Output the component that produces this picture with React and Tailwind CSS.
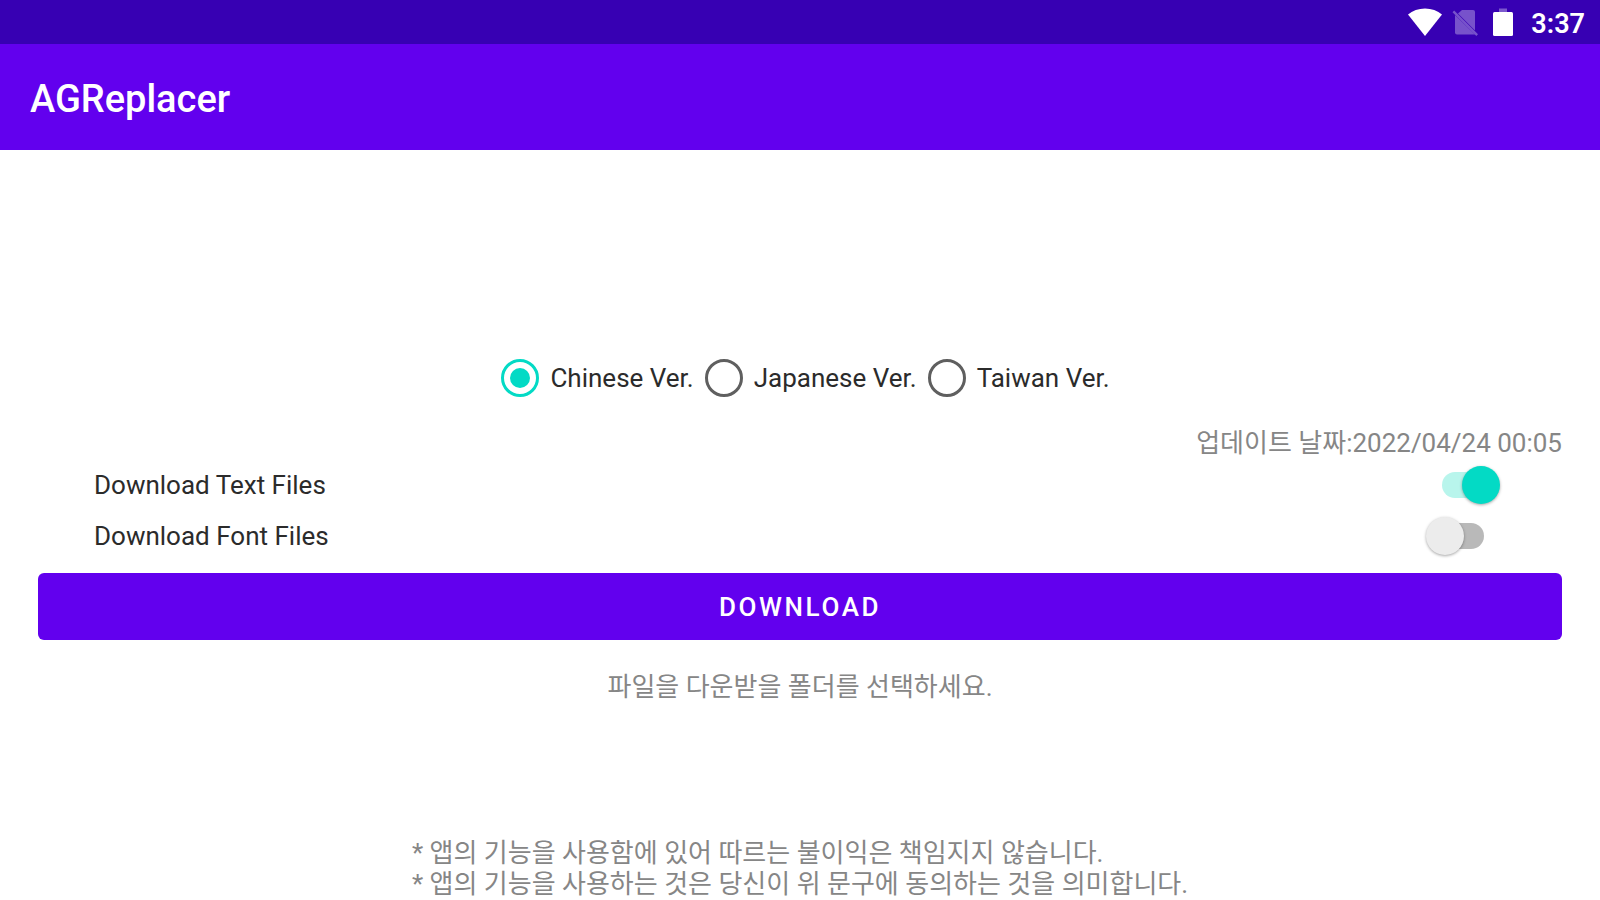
import React, { useState } from "react";

const versions = [
  { id: "chinese", label: "Chinese Ver." },
  { id: "japanese", label: "Japanese Ver." },
  { id: "taiwan", label: "Taiwan Ver." },
];

const StatusBar = () => {
  return (
    <div className="h-11 px-[15px] bg-[#3700b3] text-white flex items-center justify-end">
      {/* Wifi */}
      <svg className="w-9 h-7 mr-2" viewBox="0 0 36 28" fill="currentColor">
        <path d="M18 28 L1 6.5 C5.5 2.5 11.5 0.5 18 0.5 C24.5 0.5 30.5 2.5 35 6.5 Z" />
      </svg>
      {/* No sim */}
      <svg className="w-7 h-7 mr-3" viewBox="0 0 28 28" fill="currentColor" opacity="0.32">
        <path d="M11 2 H22 Q24 2 24 4 V22.5 L7 5.5 Z" />
        <path d="M4 7 L24 26.5 H6 Q4 26.5 4 24.5 Z" />
        <path d="M1.5 4.2 L3.2 2.5 L27 26.3 L25.3 28 Z" />
      </svg>
      {/* Battery */}
      <svg className="w-6 h-7 mr-4" viewBox="0 0 24 28" fill="currentColor">
        <path d="M8 0.5 H16 V4 H8 Z" opacity="0.35" />
        <rect x="2" y="4" width="20" height="24" rx="1.5" />
      </svg>
      <span className="pt-1 text-[27px] leading-8 font-semibold">3:37</span>
    </div>
  );
};

const Switch = ({ label, checked, onChange }) => {
  return (
    <label className="h-[51px] pl-14 pr-[62px] flex items-center justify-between text-[#2b2b2b]">
      <span>{label}</span>
      <input
        type="checkbox"
        role="switch"
        checked={checked}
        onChange={(e) => onChange(e.target.checked)}
        className="relative appearance-none w-[74px] h-[38px] before:absolute before:left-4 before:top-1.5 before:w-[42px] before:h-[26px] before:rounded-full before:bg-[#b9b9b9] checked:before:bg-[#b8f5ec] after:absolute after:left-0 after:top-0 after:size-[38px] after:rounded-full after:bg-[#ececec] after:shadow-[0_1px_3px_rgba(0,0,0,0.35)] checked:after:left-9 checked:after:bg-[#03dac5]"
      />
    </label>
  );
};

const App = () => {
  const [version, setVersion] = useState("chinese");
  const [textFiles, setTextFiles] = useState(true);
  const [fontFiles, setFontFiles] = useState(false);

  return (
    <div className="min-h-screen bg-white flex flex-col text-[26px] leading-[30px] font-[Roboto,'Noto_Sans_CJK_KR',sans-serif]">
      <StatusBar />

      <header className="h-[106px] px-[30px] pt-1 bg-[#6200ee] text-white flex items-center">
        <h1 className="text-[38px] leading-[44px] font-medium">AGReplacer</h1>
      </header>

      <main className="flex-1 px-[38px] pt-[198px] flex flex-col">
        {/* Version picker */}
        <div role="radiogroup" className="h-[60px] flex items-center justify-center text-[#2b2b2b]">
          {versions.map((v) => (
            <label key={v.id} className="pl-[11px] flex items-center gap-[11px]">
              <input
                type="radio"
                name="version"
                value={v.id}
                checked={version === v.id}
                onChange={() => setVersion(v.id)}
                className="appearance-none size-[38px] rounded-full border-[3px] border-[#5f5f5f] checked:border-[#03dac5] grid place-items-center checked:before:size-5 checked:before:rounded-full checked:before:bg-[#03dac5]"
              />
              <span>{v.label}</span>
            </label>
          ))}
        </div>

        <p className="mt-5 mb-px text-right text-[#868686]">업데이트 날짜:2022/04/24 00:05</p>

        <Switch label="Download Text Files" checked={textFiles} onChange={setTextFiles} />
        <Switch label="Download Font Files" checked={fontFiles} onChange={setFontFiles} />

        <button
          type="button"
          className="mt-3 h-[67px] w-full rounded-md bg-[#6200ee] text-white font-medium tracking-widest"
        >
          DOWNLOAD
        </button>

        <p className="mt-8 text-center text-[#868686]">파일을 다운받을 폴더를 선택하세요.</p>
      </main>

      <footer className="flex justify-center leading-[31px] text-[#868686]">
        <div>
          <p>* 앱의 기능을 사용함에 있어 따르는 불이익은 책임지지 않습니다.</p>
          <p>* 앱의 기능을 사용하는 것은 당신이 위 문구에 동의하는 것을 의미합니다.</p>
        </div>
      </footer>
    </div>
  );
};

export default App;
